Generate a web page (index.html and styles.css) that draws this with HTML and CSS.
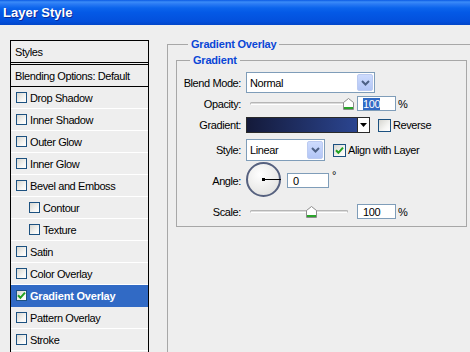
FILE: index.html
```html
<!DOCTYPE html>
<html lang="en">
<head>
  <meta charset="UTF-8">
  <title>Layer Style</title>
  <link rel="stylesheet" href="styles.css">
</head>
<body>
  <div class="titlebar">Layer Style</div>
  <div class="dialog">
    <ul class="styles-list">
      <li class="head">Styles</li>
      <li class="blend">Blending Options: Default</li>
      <li><span class="cb"></span>Drop Shadow</li>
      <li><span class="cb"></span>Inner Shadow</li>
      <li><span class="cb"></span>Outer Glow</li>
      <li><span class="cb"></span>Inner Glow</li>
      <li><span class="cb"></span>Bevel and Emboss</li>
      <li class="sub"><span class="cb"></span>Contour</li>
      <li class="sub"><span class="cb"></span>Texture</li>
      <li><span class="cb"></span>Satin</li>
      <li><span class="cb"></span>Color Overlay</li>
      <li class="selected"><span class="cb"><svg width="9" height="9" viewBox="0 0 9 9"><path d="M1 4.2 L3.4 6.8 L8 1.6" fill="none" stroke="#21a121" stroke-width="2"/></svg></span>Gradient Overlay</li>
      <li><span class="cb"></span>Pattern Overlay</li>
      <li><span class="cb"></span>Stroke</li>
    </ul>

    <div class="settings">
      <fieldset class="group outer">
        <legend>Gradient Overlay</legend>
        <fieldset class="group inner">
          <legend>Gradient</legend>

          <div class="row r-blend">
            <span class="lbl">Blend Mode:</span>
            <div class="combo wide">
              <span class="combo-text">Normal</span>
              <span class="combo-btn"><svg width="9" height="6" viewBox="0 0 9 6"><path d="M1 1 L4.5 4.5 L8 1" fill="none" stroke="#4d6185" stroke-width="2"/></svg></span>
            </div>
          </div>

          <div class="row r-opacity">
            <span class="lbl">Opacity:</span>
            <div class="slider">
              <span class="track"></span>
              <svg class="thumb" style="left: 97px" width="11" height="12" viewBox="0 0 11 12"><path d="M0.5 4.5 L5.5 0.5 L10.5 4.5 L10.5 11.5 L0.5 11.5 Z" fill="#fff" stroke="#8c8c8c"/><rect x="1" y="9" width="9" height="2" fill="#2aa52a"/></svg>
            </div>
            <span class="num"><span class="sel">100</span></span>
            <span class="unit">%</span>
          </div>

          <div class="row r-gradient">
            <span class="lbl">Gradient:</span>
            <span class="swatch"></span>
            <span class="grad-btn"><svg width="7" height="4" viewBox="0 0 7 4"><path d="M0 0 H7 L3.5 4 Z" fill="#000"/></svg></span>
            <span class="cb big"></span>
            <span class="cb-text">Reverse</span>
          </div>

          <div class="row r-style">
            <span class="lbl">Style:</span>
            <div class="combo narrow">
              <span class="combo-text">Linear</span>
              <span class="combo-btn"><svg width="9" height="6" viewBox="0 0 9 6"><path d="M1 1 L4.5 4.5 L8 1" fill="none" stroke="#4d6185" stroke-width="2"/></svg></span>
            </div>
            <span class="cb big align"><svg width="9" height="9" viewBox="0 0 9 9"><path d="M1 4.2 L3.4 6.8 L8 1.6" fill="none" stroke="#21a121" stroke-width="2"/></svg></span>
            <span class="cb-text">Align with Layer</span>
          </div>

          <div class="row r-angle">
            <span class="lbl">Angle:</span>
            <svg class="dial" width="36" height="36" viewBox="0 0 36 36">
              <defs>
                <radialGradient id="dialFill" cx="40%" cy="35%" r="70%">
                  <stop offset="0" stop-color="#ffffff"/>
                  <stop offset="1" stop-color="#e2e2e0"/>
                </radialGradient>
              </defs>
              <circle cx="17.5" cy="17.5" r="16.5" fill="url(#dialFill)" stroke="#56617f" stroke-width="2"/>
              <line x1="17.5" y1="17.5" x2="35" y2="17.5" stroke="#000" stroke-width="1"/>
              <rect x="16" y="16" width="3" height="3" fill="#000"/>
            </svg>
            <span class="num angle">0</span>
            <span class="deg">°</span>
          </div>

          <div class="row r-scale">
            <span class="lbl">Scale:</span>
            <div class="slider">
              <span class="track"></span>
              <svg class="thumb" style="left: 60px" width="11" height="12" viewBox="0 0 11 12"><path d="M0.5 4.5 L5.5 0.5 L10.5 4.5 L10.5 11.5 L0.5 11.5 Z" fill="#fff" stroke="#8c8c8c"/><rect x="1" y="9" width="9" height="2" fill="#2aa52a"/></svg>
            </div>
            <span class="num">100</span>
            <span class="unit">%</span>
          </div>
        </fieldset>
      </fieldset>
    </div>
  </div>
</body>
</html>
```

FILE: styles.css
```css
body {
  margin: 0;
  width: 470px;
  height: 352px;
  overflow: hidden;
  background: #eeeeee;
  font-family: "Liberation Sans", Arial, sans-serif;
  font-size: 11px;
  letter-spacing: -0.4px;
  color: #000;
}

.titlebar {
  height: 25px;
  line-height: 26px;
  padding-left: 3px;
  color: #fff;
  font-size: 13px;
  font-weight: bold;
  letter-spacing: 0;
  text-shadow: 1px 1px 0 #0b2a99;
  background: linear-gradient(#0a5ae4 0, #3b8cf8 2px, #2a7af4 4px, #0b64ec 8px, #0459e6 50%, #0350dc 85%, #0246c9 100%);
}

.dialog { display: flex; align-items: flex-start; padding-left: 10px; height: 327px; overflow: hidden; }

/* left list of styles */
.styles-list {
  flex: none;
  margin: 15px 0 0;
  padding: 0;
  list-style: none;
  width: 139px;
  height: 320px;
  box-sizing: border-box;
  border: 1px solid #000;
  overflow: hidden;
}
.styles-list li {
  display: flex;
  align-items: center;
  height: 21px;
  padding-left: 5px;
  border-bottom: 1px solid #fff;
  white-space: nowrap;
}
.styles-list li.head { padding-left: 4px; border-bottom: 3px double #000; }
.styles-list li.blend { padding-left: 4px; border-bottom: 1px solid #000; }
.styles-list li.sub { padding-left: 18px; }
.styles-list li.selected {
  background: #316ac5;
  border-bottom-color: #316ac5;
  color: #fff;
  font-weight: bold;
  letter-spacing: -0.2px;
}

.cb {
  display: inline-flex;
  align-items: center;
  justify-content: center;
  flex: none;
  width: 11px;
  height: 11px;
  box-sizing: border-box;
  margin-right: 3px;
  border: 1px solid #1c5180;
  background: linear-gradient(135deg, #d6d6d0, #f6f6f4 65%, #fff);
}
.cb.big { width: 13px; height: 13px; margin: 0 2px 0 8px; }
.cb-text { white-space: nowrap; }

/* right settings panel */
.settings { flex: none; margin: 13px 0 0 18px; }
fieldset.group { margin: 0; border: 1px solid #a7a7a7; min-width: 0; }
fieldset.group > legend {
  padding: 0 3px;
  color: #0a46d6;
  font-weight: bold;
  line-height: 13px;
  letter-spacing: -0.2px;
}
.outer { width: 330px; height: 320px; box-sizing: border-box; padding: 3px 0 0 8px; }
.outer > legend { margin-left: 12px; }
.inner { width: 291px; box-sizing: border-box; padding: 5px 0 7px 0; }
.inner > legend { margin-left: 13px; }

.row { display: flex; align-items: center; white-space: nowrap; }
.lbl { width: 64px; margin-right: 5px; text-align: right; flex: none; }
.r-blend { height: 21px; }
.r-opacity { height: 15px; margin-top: 3px; }
.r-gradient { height: 16px; margin-top: 6px; }
.r-style { height: 22px; margin-top: 6px; }
.r-angle { height: 35px; margin-top: 2px; }
.r-scale { height: 15px; margin-top: 6px; }

.combo {
  display: flex;
  align-items: stretch;
  height: 100%;
  box-sizing: border-box;
  padding: 1px;
  border: 1px solid #7f9db9;
  background: #fff;
}
.combo.wide { width: 129px; }
.combo.narrow { width: 79px; }
.combo-text { flex: 1; display: flex; align-items: center; padding-left: 2px; }
.combo-btn {
  display: flex;
  align-items: center;
  justify-content: center;
  width: 16px;
  box-sizing: border-box;
  border: 1px solid #bccbf1;
  border-radius: 2px;
  background: linear-gradient(#cddbfd, #b3c6f6);
}

.slider { position: relative; display: flex; align-items: center; width: 111px; height: 100%; flex: none; }
.track {
  margin-left: 4px;
  width: 96px;
  height: 1px;
  border: 1px solid #b6b6b6;
  border-bottom-color: #fff;
  border-radius: 2px;
  background: #dcdcdc;
}
.thumb { position: absolute; top: 2px; }

.num {
  display: inline-flex;
  align-items: center;
  width: 39px;
  height: 15px;
  box-sizing: border-box;
  padding-left: 5px;
  border: 1px solid #7f9db9;
  background: #fff;
  flex: none;
}
.num.angle { width: 42px; margin-left: 5px; }
.sel { background: #316ac5; color: #fff; }
.unit { margin-left: 2px; }
.deg { align-self: flex-start; margin: 6px 0 0 3px; }

.swatch {
  width: 112px;
  height: 16px;
  box-sizing: border-box;
  border: 1px solid #2a2a2a;
  background: linear-gradient(to right, #141a3a, #2b4590);
}
.grad-btn {
  display: flex;
  align-items: center;
  justify-content: center;
  width: 12px;
  height: 16px;
  box-sizing: border-box;
  border: 1px solid #2a2a2a;
  border-left: none;
  background: #fff;
}

.dial { flex: none; margin-top: -1px; }
```
